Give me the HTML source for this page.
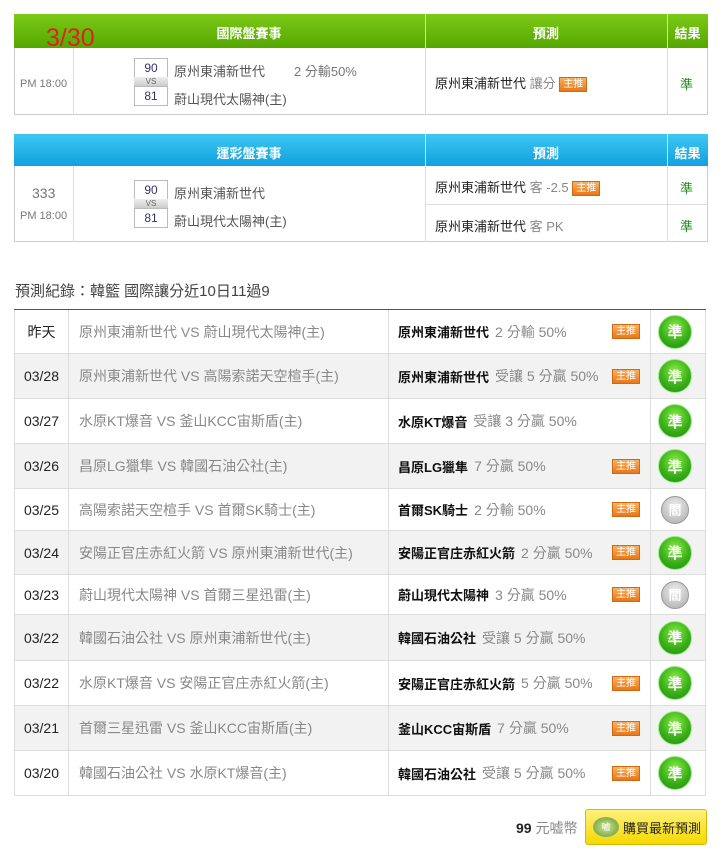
<!DOCTYPE html>
<html><head><meta charset="utf-8"><style>
*{margin:0;padding:0;box-sizing:border-box}
body{width:725px;height:852px;background:#fff;font-family:"Liberation Sans","Noto Sans CJK TC",sans-serif;position:relative;overflow:hidden;color:#333}
.a{position:absolute}
.box{position:absolute;border:1px solid #ccc}
.hd{position:absolute;color:#fff;font-size:13px;font-weight:bold;text-align:center}
.vl{position:absolute;width:1px;background:#ddd}
.sc{position:absolute;width:34px;border:1px solid #bbb;background:#fff;font-size:12px;color:#336;text-align:center}
.vs{position:absolute;width:34px;height:9px;background:linear-gradient(#eee,#ccc);font-size:8px;color:#666;text-align:center;line-height:9px}
.tj{display:inline-block;width:28px;height:15px;background:linear-gradient(#f8b060,#e87818);border:1px solid #d06a10;color:#fff;font-size:10px;line-height:13px;text-align:center;vertical-align:middle}
.row{position:absolute;left:15px;width:690px;border-bottom:1px solid #ddd;font-size:14px}
.row div{position:absolute;top:0;height:100%;display:flex;align-items:center}
.c{width:34px;height:34px;border-radius:50%;background:radial-gradient(circle at 50% 35%,#8e4,#3bb01a 55%,#1d8a10);color:#fff;font-size:15px;font-weight:bold;display:flex;align-items:center;justify-content:center;border:1px solid #9e8}
.g{width:28px;height:28px;margin-left:3px;background:radial-gradient(circle at 50% 35%,#eee,#aaa);border:1px solid #999;font-size:13px}
</style></head><body>
<div class="box" style="left:14px;top:14px;width:694px;height:101px"></div>
<div class="a" style="left:14px;top:14px;width:694px;height:34px;background:linear-gradient(#7cc918,#55a800)"></div>
<div class="hd" style="left:73px;top:23px;width:352px">國際盤賽事</div>
<div class="hd" style="left:425px;top:23px;width:242px">預測</div>
<div class="hd" style="left:667px;top:23px;width:41px">結果</div>
<div class="vl" style="left:425px;top:14px;height:101px;background:#cde"></div>
<div class="vl" style="left:667px;top:14px;height:101px;background:#cde"></div>
<div class="vl" style="left:73px;top:48px;height:67px"></div>
<div class="a" style="left:46px;top:24px;color:#d22;font-size:25px">3/30</div>
<div class="a" style="left:20px;top:78px;font-size:11px;color:#777">PM 18:00</div>
<div class="sc" style="left:134px;top:58px;height:20px;line-height:18px">90</div>
<div class="vs" style="left:134px;top:77px">VS</div>
<div class="sc" style="left:134px;top:86px;height:20px;line-height:18px">81</div>
<div class="a" style="left:174px;top:61px;font-size:13px;color:#555">原州東浦新世代</div>
<div class="a" style="left:294px;top:61px;font-size:13px;color:#777">2 分輸50%</div>
<div class="a" style="left:174px;top:89px;font-size:13px;color:#555">蔚山現代太陽神(主)</div>
<div class="a" style="left:435px;top:73px;font-size:13px;color:#222">原州東浦新世代 <span style="color:#888">讓分</span> <span class="tj">主推</span></div>
<div class="a" style="left:680px;top:74px;font-size:13px;color:#282">準</div>
<div class="box" style="left:14px;top:134px;width:694px;height:108px"></div>
<div class="a" style="left:14px;top:134px;width:694px;height:32px;background:linear-gradient(#3cc8f0,#12a0e0)"></div>
<div class="hd" style="left:73px;top:143px;width:352px">運彩盤賽事</div>
<div class="hd" style="left:425px;top:143px;width:242px">預測</div>
<div class="hd" style="left:667px;top:143px;width:41px">結果</div>
<div class="vl" style="left:425px;top:134px;height:108px"></div>
<div class="vl" style="left:667px;top:134px;height:108px"></div>
<div class="vl" style="left:73px;top:166px;height:76px"></div>
<div class="a" style="left:426px;top:204px;width:282px;height:1px;background:#ddd"></div>
<div class="a" style="left:32px;top:185px;font-size:14px;color:#777">333</div>
<div class="a" style="left:20px;top:210px;font-size:11px;color:#777">PM 18:00</div>
<div class="sc" style="left:134px;top:180px;height:20px;line-height:18px">90</div>
<div class="vs" style="left:134px;top:199px">VS</div>
<div class="sc" style="left:134px;top:208px;height:20px;line-height:18px">81</div>
<div class="a" style="left:174px;top:183px;font-size:13px;color:#555">原州東浦新世代</div>
<div class="a" style="left:174px;top:211px;font-size:13px;color:#555">蔚山現代太陽神(主)</div>
<div class="a" style="left:435px;top:177px;font-size:13px;color:#222">原州東浦新世代 <span style="color:#888">客 -2.5</span> <span class="tj">主推</span></div>
<div class="a" style="left:435px;top:216px;font-size:13px;color:#222">原州東浦新世代 <span style="color:#888">客 PK</span></div>
<div class="a" style="left:680px;top:178px;font-size:13px;color:#282">準</div>
<div class="a" style="left:680px;top:216px;font-size:13px;color:#282">準</div>
<div class="a" style="left:15px;top:280px;font-size:15px;color:#444">預測紀錄：韓籃 國際讓分近10日11過9</div>
<div class="a" style="left:14px;top:309px;width:692px;height:1px;background:#555"></div>
<div class="a" style="left:36px;top:309px;width:0;height:0;border-left:6px solid transparent;border-right:6px solid transparent;border-top:6px solid #555"></div>
<div class="a" style="left:14px;top:310px;width:692px;height:486px;border-left:1px solid #ddd;border-right:1px solid #ddd"></div>
<div id="rows"></div>
<div class="vl" style="left:68px;top:310px;height:486px"></div>
<div class="vl" style="left:388px;top:310px;height:486px"></div>
<div class="vl" style="left:650px;top:310px;height:486px"></div>
<script>
var d=[["昨天","原州東浦新世代 VS 蔚山現代太陽神(主)","原州東浦新世代","2 分輸 50%",1,0,44],
["03/28","原州東浦新世代 VS 高陽索諾天空楦手(主)","原州東浦新世代","受讓 5 分贏 50%",1,0,45],
["03/27","水原KT爆音 VS 釜山KCC宙斯盾(主)","水原KT爆音","受讓 3 分贏 50%",0,0,45],
["03/26","昌原LG獵隼 VS 韓國石油公社(主)","昌原LG獵隼","7 分贏 50%",1,0,45],
["03/25","高陽索諾天空楦手 VS 首爾SK騎士(主)","首爾SK騎士","2 分輸 50%",1,1,42],
["03/24","安陽正官庄赤紅火箭 VS 原州東浦新世代(主)","安陽正官庄赤紅火箭","2 分贏 50%",1,0,44],
["03/23","蔚山現代太陽神 VS 首爾三星迅雷(主)","蔚山現代太陽神","3 分贏 50%",1,1,40],
["03/22","韓國石油公社 VS 原州東浦新世代(主)","韓國石油公社","受讓 5 分贏 50%",0,0,46],
["03/22","水原KT爆音 VS 安陽正官庄赤紅火箭(主)","安陽正官庄赤紅火箭","5 分贏 50%",1,0,45],
["03/21","首爾三星迅雷 VS 釜山KCC宙斯盾(主)","釜山KCC宙斯盾","7 分贏 50%",1,0,45],
["03/20","韓國石油公社 VS 水原KT爆音(主)","韓國石油公社","受讓 5 分贏 50%",1,0,45]];
var y=310,h="";
d.forEach(function(r,i){
h+='<div class="row" style="top:'+y+'px;height:'+r[6]+'px;background:'+(i%2?'#f2f2f2':'#fff')+'">'+
'<div style="left:0;width:53px;justify-content:center;color:#222">'+r[0]+'</div>'+
'<div style="left:64px;color:#888">'+r[1]+'</div>'+
'<div style="left:383px;color:#111;font-weight:bold;font-size:13px">'+r[2]+'<span style="font-weight:normal;color:#888;font-size:14px;margin-left:6px">'+r[3]+'</span></div>'+
(r[4]?'<div style="left:597px"><span class="tj">主推</span></div>':'')+
'<div style="left:643px"><span class="c'+(r[5]?' g':'')+'">'+(r[5]?'閻':'準')+'</span></div></div>';
y+=r[6];});
document.getElementById('rows').innerHTML=h;
</script>
<div class="a" style="left:516px;top:818px;font-size:14px;color:#888"><b style="color:#222">99</b> 元嘘幣</div>
<div class="a" style="left:585px;top:809px;width:122px;height:36px;border:1px solid #d8b800;border-radius:3px;background:linear-gradient(#fff27a,#f5d800);display:flex;align-items:center;padding-left:7px;font-size:13px;color:#222;white-space:nowrap">
<span style="flex:none;width:26px;height:20px;border-radius:50%;background:radial-gradient(#cfe8a0,#6a9a20);border:1px solid #8a8;margin-right:4px;font-size:9px;color:#fff;text-align:center;line-height:18px">嘘</span>購買最新預測</div>
</body></html>
